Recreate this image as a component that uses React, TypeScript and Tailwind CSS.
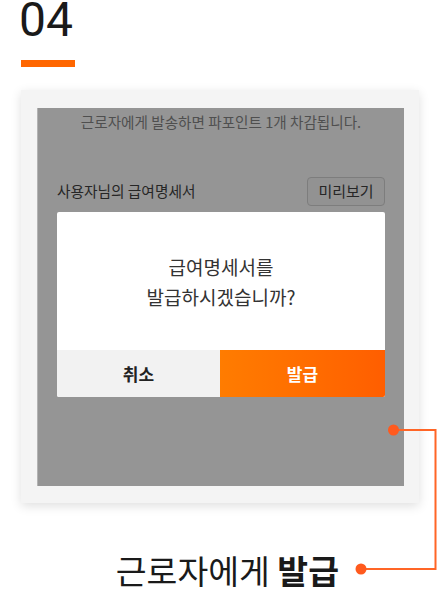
export default function App() {
  return (
    <div className="relative w-[442px] h-[594px] bg-white overflow-hidden font-['Noto_Sans_CJK_KR',sans-serif] text-[#222]">
      <div className="pl-[19px]">
        <div className="font-['Roboto',sans-serif] text-[48px] leading-[40px] text-[#1a1a1a]">04</div>
        <div className="ml-[2px] mt-[20px] w-[54px] h-[7px] bg-[#ff6600]" />
      </div>

      <div className="ml-[21px] mt-[23px] w-[398px] h-[413px] bg-[#f4f4f4] pt-[18px] pl-[16px] pr-[15px] pb-[17px] shadow-[0_3px_10px_rgba(0,0,0,0.13)]">
        <div className="w-full h-full bg-[#959595] border-l border-[#b3b3b3] flex flex-col">
          <div className="h-[28px] flex items-center justify-center text-[14.6px] text-[#4f4f4f]">
            근로자에게 발송하면 파포인트 1개 차감됩니다.
          </div>
          <div className="mt-[41px] h-[29px] px-[19px] flex items-center justify-between">
            <span className="text-[14.7px] text-[#262626]">사용자님의 급여명세서</span>
            <span className="h-[29px] w-[78px] flex items-center justify-center rounded-[4px] border border-[#7d7d7d] bg-[#929292] text-[15px] text-[#262626]">
              미리보기
            </span>
          </div>
          <div className="mt-[6px] mx-[19px] bg-white rounded-[2px] overflow-hidden flex flex-col">
            <div className="h-[138px] flex flex-col items-center justify-center text-[19px] leading-[30px] text-[#333] pt-[2px]">
              <div>급여명세서를</div>
              <div>발급하시겠습니까?</div>
            </div>
            <div className="h-[47px] flex">
              <div className="w-[163px] bg-[#f2f2f2] flex items-center justify-center text-[17px] font-bold text-[#222]">
                취소
              </div>
              <div className="flex-1 bg-gradient-to-r from-[#ff7c00] to-[#ff5e00] flex items-center justify-center text-[17px] font-bold text-white">
                발급
              </div>
            </div>
          </div>
        </div>
      </div>

      <div className="mt-[47px] pr-[103px] flex justify-end text-[33.5px] leading-[40px] text-[#1a1a1a]">
        <span>
          근로자에게 <span className="font-bold">발급</span>
        </span>
      </div>

      <svg className="absolute inset-0 pointer-events-none" width="442" height="594" viewBox="0 0 442 594">
        <polyline points="393,430 435.5,430 435.5,569 361,569" fill="none" stroke="#ff6526" strokeWidth="2" />
        <circle cx="393.5" cy="430" r="5.5" fill="#ff5a1e" />
        <circle cx="361" cy="569" r="5.5" fill="#ff5a1e" />
      </svg>
    </div>
  );
}
